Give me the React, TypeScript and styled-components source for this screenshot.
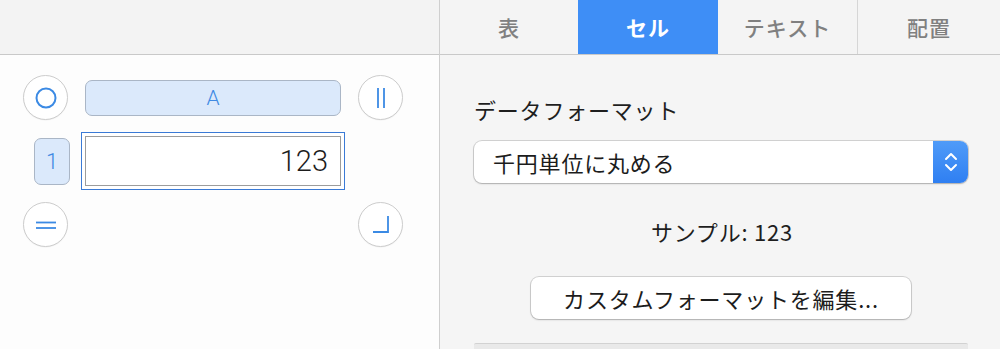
import React from "react";
import styled, { createGlobalStyle } from "styled-components";

const Global = createGlobalStyle`
  html, body { margin: 0; padding: 0; }
  body {
    width: 1000px;
    height: 349px;
    overflow: hidden;
    font-family: "Noto Sans CJK JP", "Noto Sans", sans-serif;
    background: #f5f5f5;
  }
`;

const Page = styled.div`
  display: flex;
  width: 1000px;
  height: 349px;
  overflow: hidden;
`;

/* ---------- left panel ---------- */
const LeftPanel = styled.div`
  width: 439px;
  flex: none;
  display: flex;
  flex-direction: column;
  background: #fdfdfd;
  border-right: 1px solid #cfcfcf;
`;

const TopBar = styled.div`
  height: 54px;
  flex: none;
  background: #f3f3f3;
  border-bottom: 1px solid #c9c9c9;
`;

const CellGrid = styled.div`
  display: grid;
  grid-template-columns: 45px 256px 45px;
  grid-template-rows: 45px 58px 45px;
  column-gap: 17px;
  row-gap: 12px;
  padding: 20px 0 0 23px;
  align-items: center;
`;

const RoundButton = styled.div<{ $col: number }>`
  grid-column: ${(p) => p.$col};
  width: 45px;
  height: 45px;
  box-sizing: border-box;
  border-radius: 50%;
  border: 1.5px solid #cdcdcd;
  background: #ffffff;
  display: flex;
  align-items: center;
  justify-content: center;
  box-shadow: 0 0.5px 1px rgba(0, 0, 0, 0.06);
`;

const HeaderChip = styled.div`
  height: 36px;
  box-sizing: border-box;
  border-radius: 7px;
  border: 1.5px solid #aab6c6;
  background: #dbe9fb;
  color: #3f8ae3;
  display: flex;
  align-items: center;
  justify-content: center;
  font-family: "Roboto", "Liberation Sans", sans-serif;
  font-weight: 300;
  font-size: 21px;
`;

const RowChip = styled(HeaderChip)`
  width: 36px;
  height: 47px;
  justify-self: end;
  margin-right: -2px;
  font-size: 22px;
`;

const ValueField = styled.div`
  margin: 0 -4px;
  height: 58px;
  box-sizing: border-box;
  border: 1.5px solid #3a7ad6;
  padding: 3px;
  background: #ffffff;
`;

const ValueInner = styled.div`
  height: 100%;
  box-sizing: border-box;
  border: 1.5px solid #9c9c9c;
  display: flex;
  align-items: center;
  justify-content: flex-end;
  padding-right: 12px;
  font-family: "Roboto", "Liberation Sans", sans-serif;
  font-weight: 300;
  font-size: 29px;
  color: #1d1d1d;
`;

/* ---------- right panel ---------- */
const RightPanel = styled.div`
  flex: 1;
  display: flex;
  flex-direction: column;
  background: #f5f5f5;
`;

const Tabs = styled.div`
  height: 54px;
  flex: none;
  display: grid;
  grid-template-columns: 138px 140px 139px 1fr;
  border-bottom: 1px solid #c9c9c9;
  background: #f4f4f4;
`;

const Tab = styled.div<{ $active?: boolean; $sep?: boolean }>`
  display: flex;
  align-items: center;
  justify-content: center;
  font-size: 21px;
  letter-spacing: 1px;
  font-weight: ${(p) => (p.$active ? 700 : 500)};
  color: ${(p) => (p.$active ? "#ffffff" : "#808080")};
  background: ${(p) => (p.$active ? "#3e8ef6" : "transparent")};
  border-left: ${(p) => (p.$sep ? "1px solid #d6d6d6" : "none")};
`;

const Content = styled.div`
  display: flex;
  flex-direction: column;
  padding: 41px 32px 0 34px;
  font-size: 22px;
  letter-spacing: 0.8px;
  color: #1e1e1e;
`;

const Label = styled.div`
  line-height: 26px;
`;

const Select = styled.div`
  margin-top: 19px;
  height: 42px;
  display: flex;
  border-radius: 8px;
  background: #ffffff;
  box-shadow: 0 0 0 1px rgba(0, 0, 0, 0.14), 0 1px 2px rgba(0, 0, 0, 0.18);
  overflow: hidden;
`;

const SelectText = styled.div`
  flex: 1;
  display: flex;
  align-items: center;
  padding-left: 19px;
  color: #1c1c1c;
`;

const Stepper = styled.div`
  width: 35px;
  display: flex;
  align-items: center;
  justify-content: center;
  background: linear-gradient(#4f9bf8, #2f7ff2);
`;

const Sample = styled.div`
  margin-top: 35px;
  text-align: center;
  line-height: 26px;
  padding-left: 2px;
`;

const EditButton = styled.div`
  margin: 33px auto 0;
  width: 380px;
  height: 42px;
  display: flex;
  align-items: center;
  justify-content: center;
  border-radius: 8px;
  background: #ffffff;
  box-shadow: 0 0 0 1px rgba(0, 0, 0, 0.14), 0 1px 2px rgba(0, 0, 0, 0.18);
  color: #1c1c1c;
`;

const NextBox = styled.div`
  margin-top: 24px;
  height: 30px;
  border-top: 1px solid #d2d2d2;
  background: #e9e9e9;
  border-radius: 2px 2px 0 0;
`;

const Icon = ({ kind }: { kind: "o" | "bars" | "eq" | "corner" }) => {
  const stroke = "#3b8ae4";
  return (
    <svg width="26" height="26" viewBox="0 0 26 26" fill="none" stroke={stroke} strokeWidth="2">
      {kind === "o" && <circle cx="13" cy="13" r="9.5" />}
      {kind === "bars" && (
        <>
          <line x1="10" y1="3" x2="10" y2="23" strokeWidth="1.8" />
          <line x1="16" y1="3" x2="16" y2="23" strokeWidth="1.8" />
        </>
      )}
      {kind === "eq" && (
        <>
          <line x1="3" y1="10.5" x2="23" y2="10.5" strokeWidth="1.8" />
          <line x1="3" y1="16" x2="23" y2="16" strokeWidth="1.8" />
        </>
      )}
      {kind === "corner" && <polyline points="5,20 20,20 20,4" strokeWidth="1.8" />}
    </svg>
  );
};

export default function App() {
  return (
    <>
      <Global />
      <Page>
        <LeftPanel>
          <TopBar />
          <CellGrid>
            <RoundButton $col={1}>
              <Icon kind="o" />
            </RoundButton>
            <HeaderChip>A</HeaderChip>
            <RoundButton $col={3}>
              <Icon kind="bars" />
            </RoundButton>

            <RowChip>1</RowChip>
            <ValueField>
              <ValueInner>123</ValueInner>
            </ValueField>
            <div />

            <RoundButton $col={1}>
              <Icon kind="eq" />
            </RoundButton>
            <div />
            <RoundButton $col={3}>
              <Icon kind="corner" />
            </RoundButton>
          </CellGrid>
        </LeftPanel>
        <RightPanel>
          <Tabs>
            <Tab>表</Tab>
            <Tab $active>セル</Tab>
            <Tab>テキスト</Tab>
            <Tab $sep>配置</Tab>
          </Tabs>
          <Content>
            <Label>データフォーマット</Label>
            <Select>
              <SelectText>千円単位に丸める</SelectText>
              <Stepper>
                <svg width="16" height="26" viewBox="0 0 16 26" fill="none" stroke="#ffffff" strokeWidth="2" strokeLinecap="round" strokeLinejoin="round">
                  <polyline points="3,10 8,5 13,10" />
                  <polyline points="3,16 8,21 13,16" />
                </svg>
              </Stepper>
            </Select>
            <Sample>サンプル: 123</Sample>
            <EditButton>カスタムフォーマットを編集...</EditButton>
            <NextBox />
          </Content>
        </RightPanel>
      </Page>
    </>
  );
}
